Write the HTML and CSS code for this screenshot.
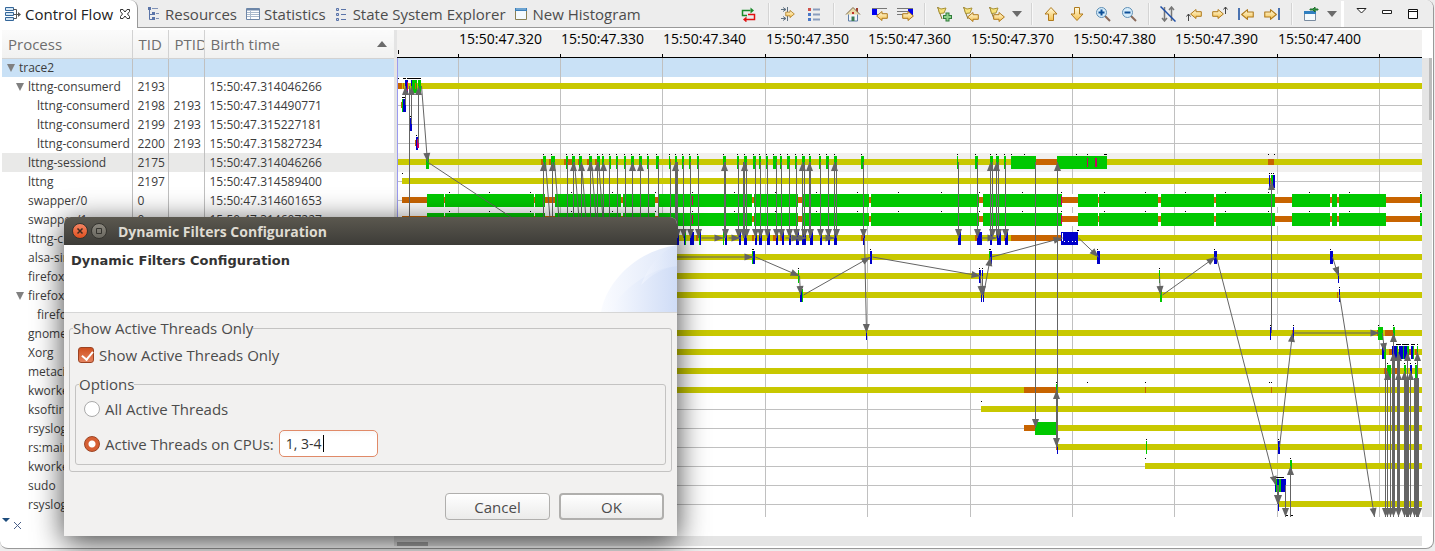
FILE: index.html
```html
<!DOCTYPE html>
<html lang="en">
<head>
    <meta charset="UTF-8">
    <meta name="viewport" content="width=device-width, initial-scale=1.0">
    <title>Control Flow</title>
    <link rel="stylesheet" href="styles.css">
</head>
<body>

    <svg class="symbols" aria-hidden="true">
        <defs>
            <linearGradient id="gold" x1="0" y1="0" x2="0" y2="1">
                <stop offset="0" stop-color="#fffbe0"/>
                <stop offset="1" stop-color="#f5c04c"/>
            </linearGradient>
        </defs>
        <symbol id="arrowRight" viewBox="0 0 12 10">
            <path d="M.7 2.700h5.300V.5L11.400 5 6 9.500V7.300H.7z" fill="url(#gold)" stroke="#b07a1c" stroke-linejoin="round"/>
        </symbol>
        <symbol id="arrowLeft" viewBox="0 0 12 10">
            <path d="M11.300 2.700H6V.5L.6 5 6 9.500V7.300h5.300z" fill="url(#gold)" stroke="#b07a1c" stroke-linejoin="round"/>
        </symbol>
        <symbol id="flag" viewBox="0 0 12 14">
            <path d="M1.500 1l4.500 12" stroke="#8a7430" fill="none"/>
            <path d="M2 1.500l3 1.500 5-1-2 5-4.500.500z" fill="#f7e27a" stroke="#a89238"/>
        </symbol>
    </svg>

    <main class="view">

        <header class="tabBar">
            <nav class="tabs">
                <a class="tab active" href="#">
                    <svg width="16" height="16" viewBox="0 0 16 16" fill="#d3e6f5" stroke="#35679a">
                        <path d="M.5 1.500h8v3h-8zM.5 6.500h8v3h-8zM.5 11.500h8v3h-8z"/>
                        <path d="M8.500 3.500h3v9h-3M8.500 8.500h6" fill="none" stroke="#555"/>
                        <path d="M13 6l3 2.500-3 2.500z" fill="#555" stroke="none"/>
                    </svg>
                    Control Flow
                    <svg class="closeIcon" width="12" height="12" viewBox="0 0 12 12" fill="#fff" stroke="#333">
                        <path d="M1.500 1.500h2.500l2 2.500 2-2.500h2.500v2L8.500 6l2 2.500v2H8L6 8l-2 2.500H1.500v-2l2-2.500-2-2.500z"/>
                    </svg>
                </a>
                <a class="tab" href="#">
                    <svg width="16" height="16" viewBox="0 0 16 16" fill="none" stroke="#5a74a8">
                        <path d="M2.500 3v10.500h3M2.500 8.500h3"/>
                        <path d="M1 2.500h3M5 7.500h3M5 12.500h3" stroke-width="3"/>
                        <path d="M5 2.500h6M9 7.500h3M9 12.500h3" stroke="#8193b8"/>
                    </svg>
                    Resources
                </a>
                <a class="tab" href="#">
                    <svg width="16" height="16" viewBox="0 0 16 16" fill="#fff" stroke="#6d86a8">
                        <path d="M.5 2.500h13v11h-13z"/>
                        <path d="M1 3.500h12" stroke-width="2"/>
                        <path d="M1 6.500h12M1 8.500h12M1 10.500h12M4.500 5v8" stroke="#a9b9cc"/>
                    </svg>
                    Statistics
                </a>
                <a class="tab" href="#">
                    <svg width="16" height="16" viewBox="0 0 16 16" fill="#c8d4ee" stroke="#5a74a8">
                        <path d="M1.500 2.500h2v2h-2zM1.500 7.500h2v2h-2zM1.500 12.500h2v2h-2z"/>
                        <path d="M6 3.500h5M6 8.500h5M6 13.500h5"/>
                    </svg>
                    State System Explorer
                </a>
                <a class="tab" href="#">
                    <svg width="16" height="16" viewBox="0 0 16 16" fill="#f4fafd" stroke="#8a8053">
                        <path d="M.5 2.500h11v11h-11z"/>
                        <path d="M0 3.500h12" stroke="#3c7fb8" stroke-width="3"/>
                        <path d="M1 3h10" stroke="#9cc8ea"/>
                    </svg>
                    New Histogram
                </a>
            </nav>

            <div class="toolbar">
                <button class="tool" type="button" aria-label="Show view filters">
                    <svg width="16" height="16" viewBox="0 0 16 16" fill="none">
                        <path d="M6 9.500H1.500V4.500h8" stroke="#1a8a2a" stroke-width="1.500"/>
                        <path d="M9.500 1.500l3.500 3-3.500 3z" fill="#1a8a2a"/>
                        <path d="M7 8.500h6.500v5H5" stroke="#e01010" stroke-width="1.500"/>
                        <path d="M5.500 10.500l-3.500 3 3.500 3z" fill="#e01010"/>
                    </svg>
                </button>
                <span class="sep"></span>
                <button class="tool" type="button" aria-label="Optimize">
                    <svg width="16" height="16" viewBox="0 0 16 16">
                        <path d="M1 3.500h5M1 12.500h5M7.500 1v5M7.500 10v5M3 1.500l3 2-3 2M3 10.500l3 2-3 2" fill="none" stroke="#5f7181"/>
                        <use href="#arrowRight" x="4" y="4" width="12" height="8"/>
                    </svg>
                </button>
                <button class="tool" type="button" aria-label="Show legend">
                    <svg width="16" height="16" viewBox="0 0 16 16">
                        <path d="M2 2h3v3H2z" fill="#d0514a"/>
                        <path d="M2 7h3v3H2zM2 12h3v3H2z" fill="#4a78c8"/>
                        <path d="M7 3.500h7M7 8.500h7M7 13.500h7" stroke="#8a9dbd" stroke-width="2"/>
                    </svg>
                </button>
                <span class="sep"></span>
                <button class="tool" type="button" aria-label="Reset time scale">
                    <svg width="16" height="16" viewBox="0 0 16 16">
                        <path d="M3.500 7.500h9v7.500h-9z" fill="#f2f5fa" stroke="#5f7fa8"/>
                        <path d="M11 2h2v4h-2z" fill="#a04030"/>
                        <path d="M1 8.500L8 1.500l7 7" fill="#e9d9a8" stroke="#7d6c4c"/>
                        <path d="M6.500 10.500h3v4.500h-3z" fill="#3a7a50"/>
                        <path d="M7 6h2v2H7z" fill="#c03028"/>
                    </svg>
                </button>
                <button class="tool" type="button" aria-label="Previous state change">
                    <svg width="17" height="16" viewBox="0 0 17 16">
                        <path d="M1 2.500h15M1 8.500h15" stroke="#777"/>
                        <path d="M1 3h5v6H1z" fill="#0000f0"/>
                        <use href="#arrowLeft" x="5" y="5" width="12" height="10"/>
                    </svg>
                </button>
                <button class="tool" type="button" aria-label="Next state change">
                    <svg width="17" height="16" viewBox="0 0 17 16">
                        <path d="M0 2.500h16M0 5.500h11M0 8.500h16" stroke="#777"/>
                        <path d="M11 3h5v6h-5z" fill="#0000f0"/>
                        <use href="#arrowRight" x="5" y="5" width="12" height="10"/>
                    </svg>
                </button>
                <span class="sep"></span>
                <button class="tool" type="button" aria-label="Add bookmark">
                    <svg width="17" height="16" viewBox="0 0 17 16">
                        <use href="#flag" x="0" y="0" width="12" height="14"/>
                        <path d="M11.500 6.500v9M7 11h9" stroke="#2f7d3a" stroke-width="4"/>
                        <path d="M11.500 7.500v7M8 11h7" stroke="#8fd08a" stroke-width="2"/>
                    </svg>
                </button>
                <button class="tool" type="button" aria-label="Previous marker">
                    <svg width="17" height="16" viewBox="0 0 17 16">
                        <use href="#flag" x="0" y="0" width="12" height="14"/>
                        <use href="#arrowLeft" x="5" y="6" width="12" height="10"/>
                    </svg>
                </button>
                <button class="tool" type="button" aria-label="Next marker">
                    <svg width="17" height="16" viewBox="0 0 17 16">
                        <use href="#flag" x="0" y="0" width="12" height="14"/>
                        <use href="#arrowRight" x="5" y="6" width="12" height="10"/>
                    </svg>
                </button>
                <button class="tool drop" type="button" aria-label="Marker menu">
                    <svg width="10" height="6" viewBox="0 0 10 6"><path d="M0 0h10L5 6z" fill="#6b6b6b"/></svg>
                </button>
                <span class="sep"></span>
                <button class="tool" type="button" aria-label="Previous process">
                    <svg width="16" height="16" viewBox="0 0 16 16">
                        <path d="M8 1.500l6 6.500h-3.500v6.500h-5V8H2z" fill="url(#gold)" stroke="#b07a1c" stroke-linejoin="round"/>
                    </svg>
                </button>
                <button class="tool" type="button" aria-label="Next process">
                    <svg width="16" height="16" viewBox="0 0 16 16">
                        <path d="M8 14.500L14 8h-3.500V1.500h-5V8H2z" fill="url(#gold)" stroke="#b07a1c" stroke-linejoin="round"/>
                    </svg>
                </button>
                <button class="tool" type="button" aria-label="Zoom in">
                    <svg width="16" height="16" viewBox="0 0 16 16">
                        <path d="M10 10l5 5" stroke="#8a6a5a" stroke-width="2"/>
                        <circle cx="6.500" cy="6.500" r="5" fill="#d6ecfa" stroke="#5f8fb5"/>
                        <path d="M3.500 6.500h6M6.500 3.500v6" stroke="#0d4f98" stroke-width="2"/>
                    </svg>
                </button>
                <button class="tool" type="button" aria-label="Zoom out">
                    <svg width="16" height="16" viewBox="0 0 16 16">
                        <path d="M10 10l5 5" stroke="#8a6a5a" stroke-width="2"/>
                        <circle cx="6.500" cy="6.500" r="5" fill="#d6ecfa" stroke="#5f8fb5"/>
                        <path d="M3.500 6.500h6" stroke="#0d4f98" stroke-width="2"/>
                    </svg>
                </button>
                <span class="sep"></span>
                <button class="tool" type="button" aria-label="Hide arrows">
                    <svg width="16" height="16" viewBox="0 0 16 16" fill="none">
                        <path d="M4.500 1v14M11.500 1v14M2 12l2.500 3L7 12M9 4l2.500-3L14 4" stroke="#777" stroke-width="1.500"/>
                        <path d="M.5.5l15 15" stroke="#1f4fa8" stroke-width="1.500"/>
                    </svg>
                </button>
                <button class="tool" type="button" aria-label="Follow backward">
                    <svg width="16" height="16" viewBox="0 0 16 16">
                        <path d="M2.500 15V8M.5 10.500l2-2.500 2 2.500" fill="none" stroke="#444"/>
                        <use href="#arrowLeft" x="4" y="3" width="12" height="10"/>
                    </svg>
                </button>
                <button class="tool" type="button" aria-label="Follow forward">
                    <svg width="16" height="16" viewBox="0 0 16 16">
                        <path d="M13.500 8V1M11.500 3.500l2-2.500 2 2.500" fill="none" stroke="#444"/>
                        <use href="#arrowRight" x="0" y="3" width="12" height="10"/>
                    </svg>
                </button>
                <button class="tool" type="button" aria-label="Go to previous event">
                    <svg width="16" height="16" viewBox="0 0 16 16">
                        <path d="M1 2v12" stroke="#4a72b0" stroke-width="2"/>
                        <use href="#arrowLeft" x="3" y="3" width="13" height="11"/>
                    </svg>
                </button>
                <button class="tool" type="button" aria-label="Go to next event">
                    <svg width="16" height="16" viewBox="0 0 16 16">
                        <path d="M15 2v12" stroke="#4a72b0" stroke-width="2"/>
                        <use href="#arrowRight" x="0" y="3" width="13" height="11"/>
                    </svg>
                </button>
                <span class="sep"></span>
                <button class="tool" type="button" aria-label="Pin view">
                    <svg width="16" height="16" viewBox="0 0 16 16">
                        <path d="M1.500 5.500h11v9h-11z" fill="#f4fafd" stroke="#7a8ca0"/>
                        <path d="M1 6.500h12" stroke="#2f7fc0" stroke-width="3"/>
                        <path d="M7 3h3l2-2v2h3v1h-3v2l-2-2H7z" fill="#2f9a40" stroke="#20702c"/>
                    </svg>
                </button>
                <button class="tool drop" type="button" aria-label="Pin menu">
                    <svg width="10" height="6" viewBox="0 0 10 6"><path d="M0 0h10L5 6z" fill="#6b6b6b"/></svg>
                </button>
                <span class="whiteSep"></span>
                <button class="tool" type="button" aria-label="View menu">
                    <svg class="raised" width="11" height="7" viewBox="0 0 11 7"><path d="M1 .5h9L5.500 5z" fill="#fff" stroke="#222"/></svg>
                </button>
                <button class="tool" type="button" aria-label="Minimize">
                    <svg class="raised" width="10" height="4" viewBox="0 0 10 4"><path d="M.5.5h9v3h-9z" fill="#fff" stroke="#222"/></svg>
                </button>
                <button class="tool" type="button" aria-label="Maximize">
                    <svg width="10" height="10" viewBox="0 0 10 10"><path d="M.5.5h9v9h-9zM0 2.500h10" fill="#fff" stroke="#111"/></svg>
                </button>
            </div>
        </header>

        <section class="content">

            <div class="treePane">
                <table class="tree">
                    <thead>
                        <tr><th class="colProcess">Process</th><th class="colId">TID</th><th class="colId">PTID</th><th class="colBirth"><span class="headSort">Birth time <svg width="10" height="6" viewBox="0 0 10 6"><path d="M0 6h10L5 0z" fill="#6b6b6b"/></svg></span></th></tr>
                    </thead>
                    <tbody>
                        <tr class="trace"><td class="root"><span class="twisty"></span>trace2</td><td></td><td></td><td></td></tr>
                        <tr><td class="lvl1 open"><span class="twisty"></span>lttng-consumerd</td><td>2193</td><td></td><td>15:50:47.314046266</td></tr>
                        <tr><td class="lvl2">lttng-consumerd</td><td>2198</td><td>2193</td><td>15:50:47.314490771</td></tr>
                        <tr><td class="lvl2">lttng-consumerd</td><td>2199</td><td>2193</td><td>15:50:47.315227181</td></tr>
                        <tr><td class="lvl2">lttng-consumerd</td><td>2200</td><td>2193</td><td>15:50:47.315827234</td></tr>
                        <tr class="selected"><td class="lvl1">lttng-sessiond</td><td>2175</td><td></td><td>15:50:47.314046266</td></tr>
                        <tr><td class="lvl1">lttng</td><td>2197</td><td></td><td>15:50:47.314589400</td></tr>
                        <tr><td class="lvl1">swapper/0</td><td>0</td><td></td><td>15:50:47.314601653</td></tr>
                        <tr><td class="lvl1">swapper/1</td><td>0</td><td></td><td>15:50:47.314607227</td></tr>
                        <tr><td class="lvl1">lttng-c</td><td></td><td></td><td></td></tr>
                        <tr><td class="lvl1">alsa-sin</td><td></td><td></td><td></td></tr>
                        <tr><td class="lvl1">firefox</td><td></td><td></td><td></td></tr>
                        <tr><td class="lvl1 open"><span class="twisty"></span>firefox</td><td></td><td></td><td></td></tr>
                        <tr><td class="lvl2">firefox</td><td></td><td></td><td></td></tr>
                        <tr><td class="lvl1">gnome</td><td></td><td></td><td></td></tr>
                        <tr><td class="lvl1">Xorg</td><td></td><td></td><td></td></tr>
                        <tr><td class="lvl1">metacity</td><td></td><td></td><td></td></tr>
                        <tr><td class="lvl1">kworker</td><td></td><td></td><td></td></tr>
                        <tr><td class="lvl1">ksoftirq</td><td></td><td></td><td></td></tr>
                        <tr><td class="lvl1">rsyslog</td><td></td><td></td><td></td></tr>
                        <tr><td class="lvl1">rs:main</td><td></td><td></td><td></td></tr>
                        <tr><td class="lvl1">kworker</td><td></td><td></td><td></td></tr>
                        <tr><td class="lvl1">sudo</td><td></td><td></td><td></td></tr>
                        <tr><td class="lvl1">rsyslog</td><td></td><td></td><td></td></tr>
                    </tbody>
                </table>
                <div class="treeFoot">
                    <svg width="24" height="16" viewBox="0 0 24 16">
                        <path d="M1 2h8L5 6z" fill="#1d4c7c"/>
                        <path d="M13 6l7 7M20 6l-7 7" stroke="#4a5f88" fill="none"/>
                    </svg>
                </div>
            </div>

            <div class="chartPane">
                <svg id="chart" class="chart"></svg>
                <div class="hScroll"><span class="hThumb"></span></div>
            </div>

            <div class="vScroll"><span class="vThumb"></span></div>

        </section>
    </main>

    <form class="dialog" onsubmit="event.preventDefault()">
        <div class="titleBar">
            <button class="winBtn close" type="button" aria-label="Close">
                <svg width="8" height="8" viewBox="0 0 8 8"><path d="M1.500 1.500l5 5M6.500 1.500l-5 5" stroke="#3f2a20" stroke-width="1.500"/></svg>
            </button>
            <button class="winBtn" type="button" aria-label="Maximize window">
                <svg width="8" height="8" viewBox="0 0 8 8"><path d="M1.500 1.500h5v5h-5z" fill="none" stroke="#35342f"/></svg>
            </button>
            <span class="winTitle">Dynamic Filters Configuration</span>
        </div>
        <div class="banner">
            <h1>Dynamic Filters Configuration</h1>
            <svg width="76" height="67" viewBox="0 0 76 67">
                <defs>
                    <linearGradient id="swoosh">
                        <stop offset="0" stop-color="#f8faff"/>
                        <stop offset="1" stop-color="#cfdcf6"/>
                    </linearGradient>
                </defs>
                <path d="M0 67C5 38 34 6 76 0v67z" fill="url(#swoosh)" opacity=".7"/>
                <path d="M8 67C20 46 46 24 76 21v46z" fill="url(#swoosh)"/>
                <path d="M40 40C48 20 60 6 76 0v21C62 23 50 30 40 40z" fill="url(#swoosh)" opacity=".5"/>
            </svg>
        </div>
        <div class="dialogBody">
            <fieldset class="group">
                <legend>Show Active Threads Only</legend>
                <div class="field">
                    <input class="check" type="checkbox" id="activeOnly" checked>
                    <label for="activeOnly">Show Active Threads Only</label>
                </div>
                <fieldset class="options">
                    <legend>Options</legend>
                    <div class="field">
                        <input class="radio" type="radio" name="threads" id="allThreads">
                        <label for="allThreads">All Active Threads</label>
                    </div>
                    <div class="field cpuField">
                        <input class="radio" type="radio" name="threads" id="cpuThreads" checked>
                        <label for="cpuThreads">Active Threads on CPUs:</label>
                        <span class="cpuBox"><input class="cpus" type="text" value="1, 3-4" aria-label="CPUs"><span class="caret"></span></span>
                    </div>
                </fieldset>
            </fieldset>
            <div class="buttons">
                <button class="btn" type="button">Cancel</button>
                <button class="btn default" type="submit">OK</button>
            </div>
        </div>
    </form>

    <script src="chart.js"></script>
</body>
</html>
```
FILE: styles.css
```css
*{
    box-sizing: border-box;
}

body{
    margin: 0;
    background: #ededed;
    font-family: "Open Sans", "Noto Sans", sans-serif;
    font-size: 15px;
    color: #4c4c4c;
    overflow: hidden;
}

.symbols{
    display: block;
    width: 0;
    height: 0;
}

/* view */

.view{
    display: flex;
    flex-direction: column;
    margin-right: 1px;
    padding: 0 1px 2px 2px;
    background: #fff;
    border-right: 1px solid #999;
    border-bottom: 1px solid #999;
    border-radius: 0 8px 8px 8px;
}

.tabBar{
    display: flex;
    justify-content: space-between;
    height: 28px;
    margin: 0 -1px 2px -2px;
    background: #ededed;
    border-bottom: 1px solid #999;
    border-radius: 0 8px 0 0;
}

.tabs{
    display: flex;
}

.tab{
    display: flex;
    align-items: center;
    gap: 2px;
    height: 28px;
    padding: 0 0 0 9px;
    color: #4c4c4c;
    text-decoration: none;
    white-space: nowrap;
}

.tab.active{
    gap: 4px;
    padding: 0 6px 0 5px;
    background: #fff;
    color: #222;
    border-right: 1px solid #999;
    border-radius: 0 8px 0 0;
}

.closeIcon{
    margin-left: 2px;
}

.toolbar{
    display: flex;
    align-items: center;
    padding-right: 7px;
}

.tool{
    display: flex;
    align-items: center;
    justify-content: center;
    width: 26px;
    height: 26px;
    padding: 0;
    border: 0;
    border-radius: 4px;
    background: none;
}

.tool.drop{
    width: 16px;
}

.raised{
    margin-bottom: 4px;
}

.sep{
    width: 1px;
    height: 22px;
    margin: 0 6px;
    background: #d4d4d4;
    box-shadow: 1px 0 #f8f8f8;
}

.whiteSep{
    width: 3px;
    height: 26px;
    margin: 0 4px 0 1px;
    background: #fff;
}

.content{
    display: flex;
}

/* tree */

.treePane{
    flex: 0 0 395px;
    background: #fff;
    border-right: 3px solid #e4e4e4;
}

.tree{
    width: 100%;
    table-layout: fixed;
    border-collapse: collapse;
    font-size: 12px;
    color: #3c3c3c;
}

.tree th{
    height: 28px;
    padding: 0 0 0 6px;
    border-right: 1px solid #d2d2d2;
    border-bottom: 1px solid #d2d2d2;
    background: linear-gradient(#fbfbfb, #f1f1f0);
    font-size: 15px;
    font-weight: normal;
    line-height: 20px;
    text-align: left;
    color: #6e6e6e;
    overflow: hidden;
    white-space: nowrap;
}

.tree th:last-child{
    border-right: 0;
}

.colProcess{
    width: 130px;
}

.colId{
    width: 36px;
}

.headSort{
    display: flex;
    align-items: center;
    justify-content: space-between;
    padding-right: 7px;
}

.tree td{
    height: 19px;
    padding: 0 0 0 5px;
    border-right: 1px solid #c0c0c0;
    line-height: 18px;
    white-space: nowrap;
    overflow: hidden;
}

.tree td:last-child{
    border-right: 0;
}

.tree .root{
    padding-left: 5px;
}

.tree .lvl1{
    padding-left: 26px;
}

.tree .lvl1.open{
    padding-left: 14px;
}

.tree .lvl2{
    padding-left: 35px;
}

.twisty{
    display: inline-block;
    margin-right: 4px;
    border: 4px solid transparent;
    border-top: 8px solid #808080;
    border-bottom: 0;
}

.trace{
    background: #c9e1f6;
}

.selected{
    background: #e9e9e8;
}

.treeFoot{
    height: 32px;
    padding-top: 2px;
}

.treeFoot svg{
    display: block;
    margin-left: -1px;
}

/* chart */

.chartPane{
    flex: 1;
    min-width: 0;
    display: flex;
    flex-direction: column;
    justify-content: space-between;
}

.chart{
    display: block;
    width: 100%;
    height: 487px;
    background: #fff;
}

.chart text{
    font-size: 14px;
    fill: #000;
}

.hScroll{
    height: 10px;
    padding-top: 6px;
    background: #e5e5e5;
}

.hThumb{
    display: block;
    width: 31px;
    height: 4px;
    background: #a8a8a8;
}

.vScroll{
    width: 10px;
    height: 459px;
    margin-top: 28px;
    background: #e5e5e5;
}

.vThumb{
    display: block;
    width: 3px;
    height: 62px;
    margin-left: 7px;
    background: #bcbcbc;
}

/* dialog */

.dialog{
    position: absolute;
    top: 217px;
    left: 64px;
    width: 613px;
    background: #f2f1f0;
    border-radius: 7px 7px 0 0;
    box-shadow: 0 6px 30px rgba(0, 0, 0, 0.75);
}

.titleBar{
    display: flex;
    align-items: center;
    gap: 3px;
    height: 28px;
    padding-left: 8px;
    background: linear-gradient(#5b584f, #3d3c38);
    border-radius: 7px 7px 0 0;
}

.winBtn{
    display: flex;
    align-items: center;
    justify-content: center;
    width: 16px;
    height: 16px;
    padding: 0;
    border: 1px solid #35342f;
    border-radius: 50%;
    background: linear-gradient(#8a877e, #6a6860);
}

.winBtn.close{
    background: linear-gradient(#f58563, #e0501f);
}

.winTitle{
    margin-left: 8px;
    font-size: 14px;
    font-weight: bold;
    color: #dfdbd2;
}

.banner{
    display: flex;
    justify-content: space-between;
    height: 68px;
    padding-left: 7px;
    background: #fff;
    border-bottom: 1px solid #d6d6d6;
}

.banner h1{
    margin: 8px 0 0;
    font-family: "DejaVu Sans", sans-serif;
    font-size: 13px;
    line-height: 16px;
    color: #333;
}

.dialogBody{
    padding: 5px 5px 16px;
}

fieldset{
    margin: 0;
    min-width: 0;
    border: 1px solid #c4c3c2;
    border-radius: 3px;
}

legend{
    height: 20px;
    padding: 0;
    line-height: 20px;
}

.group{
    padding: 7px 5px 6px 4px;
}

.group > legend{
    margin-left: -1px;
}

.group > .field{
    padding-left: 4px;
}

.options{
    margin: 9px 0 0 1px;
    padding: 5px 8px 7px;
}

.options > legend{
    margin-left: -5px;
}

.field{
    display: flex;
    align-items: center;
    height: 20px;
    gap: 5px;
}

.cpuField{
    height: 27px;
    margin-top: 11px;
}

.check,
.radio{
    appearance: none;
    flex: none;
    width: 16px;
    height: 16px;
    margin: 0;
    border: 1px solid #aaa;
    background: #fff;
}

.check{
    border-radius: 3px;
}

.radio{
    border-radius: 50%;
}

.check:checked{
    border-color: #9c4322;
    background: linear-gradient(#d0501f, #e58460);
}

.check:checked::after{
    content: "";
    display: block;
    width: 5px;
    height: 9px;
    margin: 1px 0 0 5px;
    border: solid #fff;
    border-width: 0 2px 2px 0;
    transform: rotate(40deg);
}

.radio:checked{
    border-color: #9c4322;
    background: radial-gradient(circle, #fff 3px, #d65f33 4px);
}

.cpuBox{
    display: flex;
    align-items: center;
    width: 99px;
    height: 27px;
    padding-left: 6px;
    border: 1px solid #e08a68;
    border-radius: 5px;
    background: linear-gradient(#f8f8f8, #fff 6px);
}

.cpus{
    width: 37px;
    padding: 0;
    border: 0;
    outline: none;
    background: none;
    font: inherit;
    font-size: 14px;
    color: #333;
}

.caret{
    width: 1px;
    height: 17px;
    background: #000;
}

.buttons{
    display: flex;
    justify-content: flex-end;
    gap: 9px;
    margin: 21px 8px 0 0;
}

.btn{
    width: 105px;
    height: 27px;
    padding: 0;
    border: 1px solid #b0afad;
    border-radius: 4px;
    background: linear-gradient(#fff, #ebebea);
    font: inherit;
    line-height: 20px;
    color: #4c4c4c;
}

.btn.default{
    border: 2px solid #b0afad;
}
```
FILE: chart.js
```js
const NS = "http://www.w3.org/2000/svg";
const chart = document.getElementById("chart");

const ROW_H = 19;
const TOP = 58;
const LEFT = 397;
const RIGHT = 1422;
const BOTTOM = 517;

const colors = {
    y: "#c8c800",
    o: "#c86400",
    g: "#00c800",
    b: "#0000c8",
    m: "#c80064",
    w: "#ffffff"
};

const g = document.createElementNS(NS, "g");
g.setAttribute("transform", "translate(-397 -30)");
chart.appendChild(g);

function add(tag, attrs) {
    const el = document.createElementNS(NS, tag);
    for (const key in attrs) {
        el.setAttribute(key, attrs[key]);
    }
    g.appendChild(el);
    return el;
}

function rect(x, y, width, height, fill) {
    add("rect", { x, y, width, height, fill, "shape-rendering": "crispEdges" });
}

// background and time axis
rect(LEFT, 30, 3000, 27, "#f2f1f0");
rect(LEFT, TOP, 3000, ROW_H, "#c9e1f6");
rect(LEFT, TOP + 5 * ROW_H, 3000, ROW_H, "#f1f0ef");

const ticks = [458, 560, 662, 765, 867, 970, 1072, 1174, 1277, 1379];
ticks.forEach((x, i) => {
    rect(x, TOP, 1, BOTTOM - TOP, "#c0c0c0");
    rect(x, 54, 1, 3, "#000");
    if (i < 9) {
        add("text", { x: x + 1, y: 44 }).textContent = "15:50:47." + (320 + i * 10);
    }
});
rect(398, 50, 1, 4, "#000");
rect(LEFT, 57, 3000, 1, "#000");

// state letter, start and end for each row: y and o are thin bars, the others are tall
const swapper = [
    "o402-427", "g427-444", "o444-445", "g445-534", "o534-535", "g535-545", "o545-555",
    "g555-621", "o621-623", "g623-655", "o655-659", "g659-753", "m692-693", "o752-754",
    "g754-799", "o798-802", "g802-870", "o869-871", "g871-980", "o979-983", "g983-1062",
    "m1061-1062", "o1062-1078", "g1078-1098", "o1098-1099", "g1099-1159",
    "o1158-1161", "g1161-1215", "o1214-1216", "g1216-1275", "o1275-1292", "g1292-1331",
    "o1330-1332", "g1332-1338", "o1337-1339", "g1339-1386", "o1386-1420", "g1420-1422"
];

const rows = {
    1: ["y397-1422", "g397-398", "o398-402", "o403-404", "b405-408", "m407-408", "b411-412", "g412-417", "o415-416", "g418-421"],
    2: ["o401-402", "g402-403", "b403-406"],
    3: ["b410-412"],
    4: ["o415-416", "b416-418", "m417-419"],
    5: ["y397-1422", "g426-429", "o541-543", "g543-546", "o549-551", "g551-555", "o564-566", "g566-568",
        "o568-573", "g572-575", "o578-580", "g579-582", "o587-589", "g589-592", "o595-598", "g597-600",
        "g602-604", "g609-611", "g616-618", "g624-626", "g631-634", "g639-642", "g647-649", "g656-659",
        "o669-671", "g669-670", "g675-677", "g682-684", "g689-691", "g697-699", "g723-726", "g737-739",
        "g744-747", "g753-756", "g759-761", "g766-768", "g773-777", "g780-782", "g787-790", "g795-797",
        "g802-805", "g809-811", "g819-821", "g826-829", "g834-837", "g861-864", "g957-958", "g975-978",
        "g990-993", "g996-999", "g1004-1006", "g1011-1036", "o1036-1057", "g1057-1107", "m1087-1088",
        "m1095-1097", "o1268-1274"],
    6: ["y402-1270", "b1269-1270", "o1270-1271", "g1271-1273", "b1273-1275"],
    7: swapper,
    8: swapper,
    9: ["y397-1422", "b677-679", "b684-686", "g685-686", "b690-694", "o696-698", "g699-700", "b700-701",
        "g723-724", "b725-727", "b739-741", "b744-747", "o752-754", "b755-757", "b759-762", "b767-770",
        "o773-777", "b776-778", "o780-782", "b782-784", "b789-791", "b796-799", "b802-806", "b810-813",
        "b820-822", "b828-830", "b834-837", "o861-863", "b863-865", "b958-961", "o975-977", "b977-982",
        "b990-992", "b997-1001", "o1004-1005", "b1005-1008", "o1011-1061", "b1061-1078"],
    10: ["y397-1422", "g752-753", "b753-755", "b870-872", "g989-990", "b990-992", "b1097-1100", "b1214-1217", "b1330-1333"],
    11: ["y397-1422", "g798-799", "b979-981", "b982-983", "g1159-1160", "b1338-1339"],
    12: ["y397-1422", "b800-802", "g802-803", "b981-982", "b983-984", "g1160-1162", "o1337-1338", "b1339-1340"],
    14: ["y397-1422", "b866-867", "b1270-1271", "o1292-1293", "b1293-1294", "o1377-1378", "g1378-1383", "o1385-1393", "g1393-1395"],
    15: ["y397-1422", "b1382-1385", "g1384-1386", "o1389-1392", "b1392-1398", "g1397-1398", "b1399-1407", "g1403-1404", "g1407-1409",
        "o1409-1411", "b1411-1414", "g1413-1414", "o1415-1418", "g1417-1418"],
    16: ["y397-1422", "o1384-1387", "g1387-1391", "o1395-1397", "b1399-1400", "g1404-1406", "b1410-1412", "g1415-1418"],
    17: ["y397-1422", "o1024-1056", "g1056-1057", "o1145-1146", "o1271-1272"],
    18: ["y981-1422"],
    19: ["o1024-1035", "g1035-1057", "y1057-1422"],
    20: ["y1057-1422", "o1056-1057", "b1057-1058", "g1146-1147", "b1278-1280"],
    21: ["y1145-1422", "g1290-1292"],
    22: ["b1275-1286", "g1276-1277", "g1279-1281"],
    23: ["y1278-1422", "b1278-1279"]
};

for (let r = 1; r < 24; r++) {
    const top = TOP + r * ROW_H;
    rect(LEFT, top + 9, RIGHT - LEFT, 1, "#c0c0c0");
    (rows[r] || []).forEach(item => {
        const state = item[0];
        const [start, end] = item.slice(1).split("-").map(Number);
        if (state === "y" || state === "o") {
            if (r === 7 || r === 8) {
                rect(start, top + 3, end - start, 13, colors.w);
            }
            rect(start, top + 6, end - start, 6, colors[state]);
        } else if (state === "m") {
            rect(start, top + 5, end - start, 9, colors.m);
        } else {
            rect(start, top + 3, end - start, 13, colors[state]);
            // event marks over the short states
            if (end - start < 6) {
                rect(start, top + 1, 1, 1, "#000");
            }
        }
    });
}

// system call ticks over the rows
[449, 489, 530, 571, 612, 655, 692, 734, 775, 816, 857, 898, 941, 979, 1022, 1061, 1104, 1145, 1185, 1225, 1268, 1309, 1349].forEach(x => {
    rect(x, 192, 1, 1, "#000");
    rect(x, 211, 1, 1, "#000");
});
[[397, 78, 2], [403, 78, 2], [407, 78, 14], [402, 97, 4], [402, 173, 1], [1011, 154, 1], [1024, 154, 1], [1076, 154, 1],
 [1087, 154, 1], [1104, 154, 3], [1268, 154, 1], [1274, 154, 1], [981, 401, 1], [1087, 382, 1], [1145, 382, 1],
 [1146, 439, 1], [1145, 458, 1], [1275, 477, 9], [1269, 382, 1], [1271, 382, 1], [1286, 515, 2], [1291, 515, 2],
 [1396, 344, 5], [1402, 344, 7], [1411, 344, 4], [1077, 230, 2]].forEach(d => rect(d[0], d[1], d[2], 1, "#000"));
[1064, 1068, 1072, 1075].forEach(x => rect(x, 241, 1, 1, "#fff"));
rect(1062, 233, 1, 8, "#fff");

// cursor
rect(LEFT, TOP, 1, BOTTOM - TOP, "#9a9af0");

function center(row) {
    return TOP + row * ROW_H + 9;
}

function line(x1, y1, x2, y2, width) {
    add("line", { x1: x1 + 0.5, y1, x2: x2 + 0.5, y2, stroke: "#646464", "stroke-width": width || 1 });
}

function arrow(x1, y1, x2, y2, width) {
    line(x1, y1, x2, y2, width);
    const angle = Math.atan2(y2 - y1, x2 - x1) * 180 / Math.PI;
    add("path", {
        d: "M0 0L-9 -3.5V3.5z",
        fill: "#646464",
        transform: `translate(${x2 + 0.5} ${y2}) rotate(${angle})`
    });
}

// wake ups between lttng-sessiond and the consumer
[543, 552, 573, 581, 590, 597, 603, 632, 640, 675, 724, 744, 802, 809, 834, 990, 996].forEach(x => {
    arrow(x, center(9), x, center(5));
});
[677, 683, 690, 698, 725, 738, 743, 746, 755, 760, 767, 776, 781, 789, 796, 804, 810, 820, 828, 836, 863, 958, 977, 992, 998, 1005].forEach(x => {
    arrow(x, center(5), x, center(9));
});
[567, 609, 617, 625, 648, 658, 670, 676].forEach(x => line(x, center(5), x, center(9)));
[546, 555, 575, 582, 592, 599].forEach(x => line(x - 1, center(5), x + 5, center(9)));

const links = [
    [405, 2, 405, 1], [411, 3, 411, 1], [418, 4, 418, 1], [421, 1, 427, 5],
    [701, 9, 723, 9], [728, 9, 740, 9], [785, 9, 800, 9], [797, 9, 806, 9], [822, 9, 834, 9], [981, 9, 996, 9],
    [600, 10, 753, 10], [755, 10, 799, 11], [799, 11, 800, 12], [803, 12, 870, 10],
    [872, 10, 980, 11], [980, 11, 981, 12], [982, 11, 982, 12], [983, 12, 990, 10],
    [991, 10, 1062, 9], [1078, 9, 1098, 10], [864, 9, 866, 14],
    [1035, 5, 1035, 19], [1057, 20, 1057, 5], [1056, 20, 1056, 17], [1056, 17, 1056, 20],
    [1159, 11, 1160, 12], [1162, 12, 1215, 10], [1216, 10, 1275, 22],
    [1332, 10, 1338, 11], [1271, 14, 1271, 6], [1279, 20, 1292, 14], [1293, 14, 1379, 14],
    [1382, 14, 1384, 15], [1278, 22, 1278, 23], [1277, 22, 1277, 23]
];
links.forEach(l => arrow(l[0], center(l[1]), l[2], center(l[3])));
line(409, center(1), 409, 300);
line(427, center(5), 530, 230);
arrow(1339, center(12), 1374, BOTTOM);
arrow(1285, center(22), 1285, BOTTOM);
arrow(1290, BOTTOM, 1290, center(21));

// dense switches at the end of the window
[[1387, 16], [1393, 15], [1393, 14], [1398, 15], [1398, 16], [1404, 16], [1407, 15], [1410, 16], [1417, 15]].forEach(a => {
    arrow(a[0], BOTTOM, a[0], center(a[1]));
});
[[1385, 15, 1], [1387, 16, 1], [1390, 16, 1], [1393, 15, 3], [1398, 15, 3], [1406, 16, 5], [1410, 16, 1], [1416, 16, 5]].forEach(a => {
    line(a[0], center(a[1]) + 7, a[0], BOTTOM - 5, a[2]);
    arrow(a[0], BOTTOM - 10, a[0], BOTTOM);
});
[1404, 1408, 1414, 1418].forEach(x => arrow(x, BOTTOM - 10, x, BOTTOM));
```
